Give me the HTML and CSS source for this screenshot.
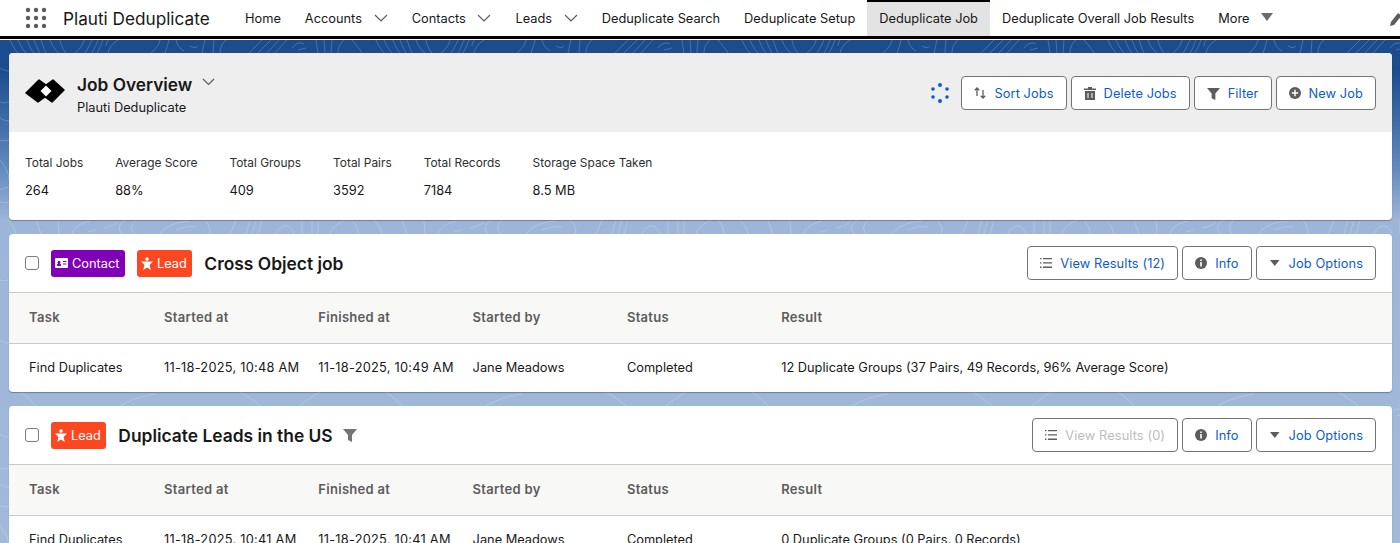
FILE: index.html
```html
<!DOCTYPE html>
<html lang="en">
<head>
  <meta charset="UTF-8">
  <title>Deduplicate Job</title>
  <link rel="stylesheet" href="styles.css">
</head>
<body>

  <div class="topbar">
    <svg class="waffle" width="22" height="22" viewBox="0 0 22 22" fill="#5c5c5c">
      <circle cx="3" cy="3" r="2.2"/><circle cx="11" cy="3" r="2.2"/><circle cx="19" cy="3" r="2.2"/>
      <circle cx="3" cy="11" r="2.2"/><circle cx="11" cy="11" r="2.2"/><circle cx="19" cy="11" r="2.2"/>
      <circle cx="3" cy="19" r="2.2"/><circle cx="11" cy="19" r="2.2"/><circle cx="19" cy="19" r="2.2"/>
    </svg>
    <span class="app-name">Plauti Deduplicate</span>
    <nav class="nav">
      <a class="nav-item">Home</a>
      <a class="nav-item">Accounts
        <svg class="nav-chevron" width="14" height="8" viewBox="0 0 14 8" fill="none" stroke="#5c5c5c" stroke-width="1.2"><path d="M1 1l6 6 6-6"/></svg>
      </a>
      <a class="nav-item">Contacts
        <svg class="nav-chevron" width="14" height="8" viewBox="0 0 14 8" fill="none" stroke="#5c5c5c" stroke-width="1.2"><path d="M1 1l6 6 6-6"/></svg>
      </a>
      <a class="nav-item">Leads
        <svg class="nav-chevron" width="14" height="8" viewBox="0 0 14 8" fill="none" stroke="#5c5c5c" stroke-width="1.2"><path d="M1 1l6 6 6-6"/></svg>
      </a>
      <a class="nav-item">Deduplicate Search</a>
      <a class="nav-item">Deduplicate Setup</a>
      <a class="nav-item active">Deduplicate Job</a>
      <a class="nav-item">Deduplicate Overall Job Results</a>
      <a class="nav-item">More
        <svg class="nav-caret" width="12" height="8" viewBox="0 0 12 8" fill="#6b6b6b"><path d="M0 0h12L6 8z"/></svg>
      </a>
    </nav>
    <svg class="pencil" width="10" height="13" viewBox="0 0 10 13" fill="#5c5c5c"><path d="M0 13l1-4 7-9 2 1.600v3L4 12z"/></svg>
  </div>

  <main class="page">
    <svg class="contours" width="1400" height="503" fill="none">
      <defs>
        <pattern id="topo" width="366" height="366" patternUnits="userSpaceOnUse">
          <g stroke="#fff" stroke-opacity=".2" stroke-width="1">
            <!-- band above the first card -->
            <path d="M10 0c2 5 5 10 8 13M18 0c2 5 5 10 8 13M27 0c2 5 4 10 7 13M34 0c2 5 4 10 6 13M41 0c2 5 3 10 5 13M50 0c2 6 5 10 9 13M60 0c1 5 3 10 6 13"/>
            <path d="M84 0c-1 5-5 10-9 13M92 0c-2 5-5 10-7 13M98 0c-2 5-4 10-6 13M103 0c-2 5-4 10-6 13M108 0c-1 2-2 4-2 6M118 0c-5 3-9 8-10 13"/>
            <path d="M160 0c-1 5-5 10-9 13M169 0c-1 5-3 10-4 13M176 0c1 5 4 9 8 11M190 6c4 2 6 2 8 0M205 0c-1 4-2 9-3 13M214 0l-1 13M226 0c-4 3-6 8-6 13"/>
            <path d="M262 0l-13 13M271 0l-13 13M279 0l-12 13M287 0l-12 13M292 8c4-5 8-6 12-4M298 10l8-2M316 0l2 13M324 0l1 13M332 0l-1 13M344 0c-4 3-6 8-6 13M352 0c4 5 8 9 10 13"/>
            <!-- band between the first two cards -->
            <path d="M8 180c4 4 7 9 8 14M36 180l5 14M58 180c0 5 1 9 1 14M72 194c2-6 8-11 18-13M88 192l8-2M104 188c6-1 10-3 14-6M122 194c-4-5-4-10 4-14M134 194c-4-5-2-11 2-14"/>
            <path d="M160 194c6-8 16-12 30-13M176 190c8-3 14-4 20-3M205 180c4 5 6 10 4 14M236 180c-2 5-4 10-6 14M250 180l-4 14M256 180l-4 14M262 180l-4 14M276 194c2-5 6-8 10-8s6 4 8 8M302 180v14M312 180v14M318 180v14M330 194c2-6 8-12 16-14M352 180c4 5 6 10 6 14"/>
            <!-- band above the third card, and the strip left of the cards -->
            <path d="M20 352c6 4 12 9 16 14M120 366c10-6 22-10 36-12M240 352c8 4 14 9 20 14M300 366c6-5 12-10 20-14"/>
            <path d="M0 28c3 2 6 3 9 3M0 62c3 1 6 1 9 0M0 78c3 2 6 3 9 3M0 100c3 1 6 1 9 0M0 150c3-2 6-2 9-3M0 162c3 1 6 1 9 0"/>
            <path d="M0 120c4 6 9 12 9 20M0 240c3 1 6 1 9 0M0 300c3 2 6 3 9 3"/>
            <path d="M358 40c3 2 6 3 8 3M358 70c3 1 6 1 8 0M358 120c3 2 6 2 8 2M358 230c3 2 6 2 8 2M358 290c3 1 6 1 8 0"/>
          </g>
        </pattern>
      </defs>
      <rect width="1400" height="503" fill="url(#topo)"/>
    </svg>

    <section class="card">
      <header class="overview-head">
        <svg class="logo" width="40" height="24" viewBox="0 0 40 24">
          <path fill="#000" stroke="#000" stroke-width="1.500" stroke-linejoin="round" d="M1 14L14 1l7 5 7-5 11 10-12 12-7-5-7 5z"/>
          <path fill="#fff" d="M21 6.500l5.500 5.500-5.500 5.500-5.500-5.500z"/>
        </svg>
        <div class="overview-title">
          <div class="overview-name">Job Overview
            <svg class="title-chevron" width="13" height="8" viewBox="0 0 13 8" fill="none" stroke="#5c5c5c" stroke-width="1.2"><path d="M1 1l5.500 5.500L12 1"/></svg>
          </div>
          <div class="overview-sub">Plauti Deduplicate</div>
        </div>
        <svg class="spinner" width="20" height="20" viewBox="0 0 20 20" fill="#0b5cd0">
          <circle cx="10" cy="2" r="2"/><circle cx="17" cy="6" r="1.8"/><circle cx="17" cy="14" r="1.8"/>
          <circle cx="10" cy="18" r="2"/><circle cx="3" cy="14" r="1.8"/><circle cx="3" cy="6" r="1.8"/>
        </svg>
        <div class="btn-group overview-btns">
          <button class="btn">
            <svg class="icon" width="12" height="14" viewBox="0 0 12 14" fill="none" stroke="#5c5c5c" stroke-width="1.3"><path d="M3 10V2M.8 4.200L3 2l2.200 2.200M9 4v8M6.800 9.800L9 12l2.200-2.200"/></svg>
            Sort Jobs</button>
          <button class="btn">
            <svg class="icon" width="12" height="14" viewBox="0 0 12 14" fill="#5c5c5c"><path fill-rule="evenodd" d="M4 1h4v1.500h4V4H0V2.500h4zM1 5h10v9H1zM3.500 7v5h1V7zM7.500 7v5h1V7z"/></svg>
            Delete Jobs</button>
          <button class="btn">
            <svg class="icon" width="13" height="13" viewBox="0 0 14 14" fill="#5c5c5c"><path d="M0 1h14L9 7v7l-4-2V7z"/></svg>
            Filter</button>
          <button class="btn">
            <svg class="icon" width="12" height="12" viewBox="0 0 13 13"><circle cx="6.500" cy="6.500" r="6.500" fill="#5c5c5c"/><path d="M6.500 3v7M3 6.500h7" stroke="#fff" stroke-width="1.600"/></svg>
            New Job</button>
        </div>
      </header>
      <div class="stats">
        <div class="stat"><div class="stat-label">Total Jobs</div><div class="stat-value">264</div></div>
        <div class="stat"><div class="stat-label">Average Score</div><div class="stat-value">88%</div></div>
        <div class="stat"><div class="stat-label">Total Groups</div><div class="stat-value">409</div></div>
        <div class="stat"><div class="stat-label">Total Pairs</div><div class="stat-value">3592</div></div>
        <div class="stat"><div class="stat-label">Total Records</div><div class="stat-value">7184</div></div>
        <div class="stat"><div class="stat-label">Storage Space Taken</div><div class="stat-value">8.5 MB</div></div>
      </div>
    </section>

    <section class="card job">
      <header class="job-head">
        <span class="check"></span>
        <span class="badge badge-contact">
          <svg width="13" height="10" viewBox="0 0 13 10" fill="#fff"><path fill-rule="evenodd" d="M1 0h11a1 1 0 0 1 1 1v8a1 1 0 0 1-1 1H1a1 1 0 0 1-1-1V1a1 1 0 0 1 1-1zM2 6.500V8h4V6.500L5 5.500a1.500 1.500 0 1 0-2 0zM8 3v1h3.500V3zM8 5.500v1h3.500v-1z"/></svg>
          Contact</span>
        <span class="badge badge-lead">
          <svg width="12" height="13" viewBox="0 0 12 13" fill="#fff"><circle cx="6" cy="2" r="1.800"/><path d="M0 4.500h12L8.500 8l1.300 5L6 10.500 2.200 13l1.300-5z"/></svg>
          Lead</span>
        <h2 class="job-title">Cross Object job</h2>
        <div class="btn-group">
          <button class="btn">
            <svg class="icon" width="12" height="10" viewBox="0 0 12 10" fill="#5c5c5c"><path d="M0 0h1.500v1.300H0zM3 0h9v1.300H3zM0 4.300h1.500v1.300H0zM3 4.300h9v1.300H3zM0 8.600h1.500V10H0zM3 8.600h9V10H3z"/></svg>
            View Results (12)</button>
          <button class="btn">
            <svg class="icon" width="12" height="12" viewBox="0 0 12 12"><circle cx="6" cy="6" r="6" fill="#5c5c5c"/><path d="M5.200 2.500h1.600v1.500H5.200zM5.200 5h1.600v4.500H5.200z" fill="#fff"/></svg>
            Info</button>
          <button class="btn">
            <svg class="icon" width="12" height="8" viewBox="0 0 12 8" fill="#5c5c5c"><path d="M1 1h9.500L5.750 7z"/></svg>
            Job Options</button>
        </div>
      </header>
      <table class="tasks">
        <thead>
          <tr><th>Task</th><th>Started at</th><th>Finished at</th><th>Started by</th><th>Status</th><th>Result</th></tr>
        </thead>
        <tbody>
          <tr>
            <td>Find Duplicates</td><td class="when">11-18-2025, 10:48 AM</td><td class="when">11-18-2025, 10:49 AM</td><td>Jane Meadows</td><td>Completed</td>
            <td>12 Duplicate Groups (37 Pairs, 49 Records, 96% Average Score)</td>
          </tr>
        </tbody>
      </table>
    </section>

    <section class="card job">
      <header class="job-head">
        <span class="check"></span>
        <span class="badge badge-lead">
          <svg width="12" height="13" viewBox="0 0 12 13" fill="#fff"><circle cx="6" cy="2" r="1.800"/><path d="M0 4.500h12L8.500 8l1.300 5L6 10.500 2.200 13l1.300-5z"/></svg>
          Lead</span>
        <h2 class="job-title">Duplicate Leads in the US</h2>
        <svg class="job-filter" width="14" height="14" viewBox="0 0 14 14" fill="#747474"><path d="M0 1h14L9 7v7l-4-2V7z"/></svg>
        <div class="btn-group">
          <button class="btn btn-off">
            <svg class="icon" width="12" height="10" viewBox="0 0 12 10" fill="#5c5c5c"><path d="M0 0h1.500v1.300H0zM3 0h9v1.300H3zM0 4.300h1.500v1.300H0zM3 4.300h9v1.300H3zM0 8.600h1.500V10H0zM3 8.600h9V10H3z"/></svg>
            View Results (0)</button>
          <button class="btn">
            <svg class="icon" width="12" height="12" viewBox="0 0 12 12"><circle cx="6" cy="6" r="6" fill="#5c5c5c"/><path d="M5.200 2.500h1.600v1.500H5.200zM5.200 5h1.600v4.500H5.200z" fill="#fff"/></svg>
            Info</button>
          <button class="btn">
            <svg class="icon" width="12" height="8" viewBox="0 0 12 8" fill="#5c5c5c"><path d="M1 1h9.500L5.750 7z"/></svg>
            Job Options</button>
        </div>
      </header>
      <table class="tasks">
        <thead>
          <tr><th>Task</th><th>Started at</th><th>Finished at</th><th>Started by</th><th>Status</th><th>Result</th></tr>
        </thead>
        <tbody>
          <tr>
            <td>Find Duplicates</td><td class="when">11-18-2025, 10:41 AM</td><td class="when">11-18-2025, 10:41 AM</td><td>Jane Meadows</td><td>Completed</td>
            <td>0 Duplicate Groups (0 Pairs, 0 Records)</td>
          </tr>
        </tbody>
      </table>
    </section>
  </main>

</body>
</html>
```

FILE: styles.css
```css
html, body {
  margin: 0;
  height: 543px;
  overflow: hidden;
}

body {
  font-family: Inter, "Liberation Sans", sans-serif;
  font-size: 13px;
  color: #181818;
  background: #fff;
}

.topbar {
  display: flex;
  align-items: center;
  height: 36px;
  border-bottom: 3px solid #000;
  padding-left: 25px;
  background: #fff;
}

.waffle {
  flex: none;
  margin-top: -1px;
}

.app-name {
  font-size: 17.200px;
  margin-left: 16px;
  width: 170px;
  flex: none;
}

.nav {
  display: flex;
  height: 100%;
  flex: 1;
}

.nav-item {
  display: flex;
  align-items: center;
  padding: 0 12px;
  white-space: nowrap;
  font-size: 12.800px;
}

.nav-item.active {
  background: #e3e3e3;
  box-shadow: inset 0 2px 0 #000;
}

.nav-chevron {
  margin-left: 11.700px;
}

.nav-caret {
  margin-left: 12px;
  margin-top: -3px;
}

.pencil {
  flex: none;
  margin-top: 2px;
}

.page {
  position: relative;
  height: 503px;
  margin-top: 1px;
  padding: 13px 8px 0 9px;
  box-sizing: border-box;
  background: linear-gradient(#1a4c8e 0, #1a4c8e 30px, #5f88bd 125px, #9db5d8 180px, #a2b9da 100%);
}

.contours {
  position: absolute;
  top: 0;
  left: 0;
}

.card {
  position: relative;
  background: #fff;
  border-radius: 4px;
  box-shadow: 0 1px 1px rgba(0, 0, 0, .3);
  overflow: hidden;
  margin-bottom: 14px;
}

.overview-head {
  display: flex;
  align-items: center;
  height: 79px;
  padding: 1px 16px 0;
  box-sizing: border-box;
  background: #eeeeee;
}

.logo {
  flex: none;
  margin-top: -4px;
}

.overview-title {
  margin-left: 12px;
  margin-top: 4px;
}

.overview-name {
  font-size: 17.300px;
  font-weight: 600;
  line-height: 24px;
  display: flex;
  align-items: center;
}

.title-chevron {
  margin-left: 10px;
  margin-top: -5px;
}

.overview-sub {
  font-size: 12.800px;
  line-height: 20px;
  margin-top: 1px;
}

.spinner {
  margin-left: auto;
  margin-right: 11px;
}

.btn-group {
  display: flex;
  gap: 4px;
  margin-left: auto;
}

.overview-btns {
  margin-left: 0;
}

.btn {
  display: flex;
  align-items: center;
  gap: 8px;
  height: 34px;
  padding: 0 12px;
  background: #fff;
  border: 1px solid #747474;
  border-radius: 4px;
  font-family: inherit;
  font-size: 12.800px;
  letter-spacing: .1px;
  color: #0b5cd0;
  white-space: nowrap;
}

.btn-off {
  color: #bdbdbd;
}

.stats {
  display: flex;
  gap: 32px;
  height: 88px;
  padding: 0 16px;
}

.stat-label {
  font-size: 11.900px;
  line-height: 16px;
  margin-top: 23px;
  color: #2e2e2e;
}

.stat-value {
  font-size: 12.800px;
  line-height: 16px;
  margin-top: 12px;
}

.job-head {
  display: flex;
  align-items: center;
  height: 58px;
  padding: 0 16px;
  border-bottom: 1px solid #c9c9c9;
}

.check {
  flex: none;
  width: 12px;
  height: 12px;
  background: #fff;
  border: 1px solid #7a7a8a;
  border-radius: 3px;
  margin-right: 12px;
}

.badge {
  display: flex;
  align-items: center;
  gap: 4px;
  height: 27px;
  padding: 0 5.500px 0 4px;
  border-radius: 3px;
  color: #fff;
  font-size: 12.800px;
  margin-right: 12px;
}

.badge-contact {
  background: #8000b8;
}

.badge-lead {
  background: #fc4720;
}

.job-title {
  font-size: 17.400px;
  font-weight: 600;
  margin: 0;
}

.job-filter {
  margin-left: 10px;
}

.tasks {
  width: 100%;
  border-collapse: collapse;
  table-layout: fixed;
}

.tasks th, .tasks td {
  box-sizing: border-box;
  text-align: left;
  padding: 0;
  white-space: nowrap;
  overflow: hidden;
  font-size: 12.800px;
  width: 154.300px;
}

.tasks th:first-child, .tasks td:first-child {
  width: 155px;
  padding-left: 20px;
}

.tasks th:last-child, .tasks td:last-child {
  width: auto;
}

.tasks th {
  height: 50px;
  padding-bottom: 1px;
  font-size: 13px;
  font-weight: 600;
  letter-spacing: .3px;
  color: #5c5c5c;
  background: #f8f8f7;
  border-bottom: 1px solid #c9c9c9;
}

.tasks td {
  height: 49px;
}

.tasks td.when {
  letter-spacing: .25px;
}
```
